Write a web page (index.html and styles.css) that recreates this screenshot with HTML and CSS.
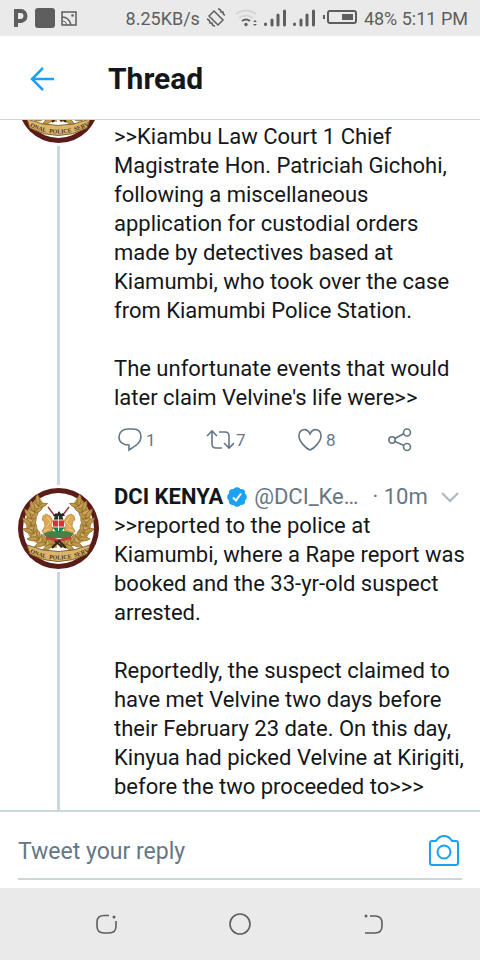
FILE: index.html
```html
<!DOCTYPE html>
<html lang="en">
<head>
<meta charset="utf-8">
<meta name="viewport" content="width=device-width, initial-scale=1">
<title>Thread</title>
<link rel="stylesheet" href="styles.css">
</head>
<body>
<svg class="defs" aria-hidden="true">
  <defs>
    <path id="ribbon-curve" d="M11 64Q40.500 79 70 64"/>
    <g id="leaf">
      <path d="M0 0Q-7-2-8-9Q0-7 0 0Q1-6 6-8Q6-1 0 0" fill="#c09a4a" stroke="#80601f" stroke-width=".6"/>
    </g>
    <g id="branch">
      <path d="M39 56Q12 55 12 35Q12 20 23 12" fill="none" stroke="#b08a3e" stroke-width="8"/>
      <path d="M39 56Q12 55 12 35Q12 20 23 12" fill="none" stroke="#d0ae66" stroke-width="7" stroke-dasharray="2 2"/>
      <use href="#leaf" transform="translate(35 57) rotate(-75)"/>
      <use href="#leaf" transform="translate(28 55) rotate(-65)"/>
      <use href="#leaf" transform="translate(21 51) rotate(-48)"/>
      <use href="#leaf" transform="translate(16 45) rotate(-28)"/>
      <use href="#leaf" transform="translate(13 38) rotate(-5)"/>
      <use href="#leaf" transform="translate(13 31) rotate(10)"/>
      <use href="#leaf" transform="translate(16 24) rotate(25)"/>
      <use href="#leaf" transform="translate(20 18) rotate(38)"/>
    </g>
    <g id="lion">
      <path d="M25 28l3-2 4 2 3 5-2 4 2 4-3 5h-6l-2-3 3-5-1-5-2-1z" fill="#dca957" stroke="#a9752e" stroke-width=".6"/>
      <path d="M29 29l4 5-5 5M26 43l5-2" fill="none" stroke="#f2d28f"/>
    </g>
    <symbol id="crest" viewBox="0 0 81 81">
      <circle cx="40.500" cy="40.500" r="40.500" fill="#5b1c19"/>
      <circle cx="40.500" cy="40.500" r="35.500" fill="#fff"/>
      <use href="#branch"/>
      <use href="#branch" transform="translate(81 0) scale(-1 1)"/>
      <path d="M30 19l19 25M51 19L32 44" stroke="#9c3439" stroke-width="1.500"/>
      <use href="#lion"/>
      <use href="#lion" transform="translate(81 0) scale(-1 1)"/>
      <path d="M35 28l3-3 1 1 2-3 2 3 2-1 2 3z" fill="#222"/>
      <path d="M40.500 26c5 2 6 7 5 12q-1 5-5 8q-4-3-5-8q-1-10 5-12z" fill="#263323"/>
      <path d="M35 32h11v7H35z" fill="#d83239"/>
      <path d="M35 39h11q-1 4-5 7q-4-2-6-7z" fill="#15864a"/>
      <path d="M35 32h11M35 39h11M40.500 28v15" stroke="#fff" stroke-width=".8"/>
      <path d="M25 46q8-5 15-2q8-3 16 2l-4 4H29z" fill="#438147"/>
      <path d="M28 48l13 3 12-3v3l-12 3-13-3z" fill="#c73e3d"/>
      <path d="M34 60l7-7 7 7M37 53l7 6" fill="none" stroke="#302414" stroke-width="2"/>
      <path d="M9 57Q40 70 72 57L69 66Q40 81 12 66z" fill="#dbb56b" stroke="#83612b"/>
      <text class="crest-text"><textPath href="#ribbon-curve" startOffset="50%" text-anchor="middle">IONAL&nbsp; POLICE&nbsp; SERV</textPath></text>
    </symbol>
  </defs>
</svg>

<div class="status">
  <svg class="status-left" width="80" height="36" viewBox="0 0 80 36" aria-hidden="true">
    <path d="M16 27V9M14 11h7a4.500 5 0 0 1 0 10h-5" fill="none" stroke="#5e5e5e" stroke-width="4"/>
    <rect x="35" y="8" width="20" height="20" rx="3" fill="#5e5e5e"/>
    <path d="M62 12h14v13H62zM62 17q7 0 9 8" fill="none" stroke="#5e5e5e" stroke-width="1.500"/>
    <path d="M63 21q3 0 4 4" fill="none" stroke="#5e5e5e"/>
    <circle cx="72.500" cy="15.500" r="1.300" fill="#5e5e5e"/>
  </svg>
  <span class="speed">8.25KB/s</span>
  <svg class="status-mid" width="154" height="36" viewBox="204 0 154 36" aria-hidden="true">
    <g fill="none" stroke="#5e5e5e" stroke-width="1.500">
      <path d="M214 11l9 9-5 5-9-9zM218 9q3 0 3 3l2 0q0 3 2 3M207 19q3 1 3 4l2 0q0 3 3 3"/>
    </g>
    <g fill="none" stroke="#d4d4d4" stroke-width="2">
      <path d="M236 14q10-7 20 0M239 18q7-5 14 0"/>
    </g>
    <path d="M242 21q4-3 8 0" fill="none" stroke="#5e5e5e" stroke-width="2"/>
    <circle cx="246" cy="24.500" r="1.700" fill="#5e5e5e"/>
    <path d="M253 22l2-2 2 2zM253 24l2 2 2-2z" fill="#5e5e5e"/>
    <g fill="none" stroke="#5e5e5e" stroke-width="3" stroke-linecap="round">
      <path d="M265.500 24v.5M272 20v5M278 15v10M284.500 11v14M294.500 24v.5M301 20v5M307 15v10M313.500 11v14"/>
    </g>
    <rect x="328" y="11" width="28" height="12" rx="2" fill="none" stroke="#5e5e5e" stroke-width="2"/>
    <path d="M342 14h11v6h-11zM323 15h2v4h-2z" fill="#5e5e5e"/>
  </svg>
  <span class="clock">48% 5:11 PM</span>
</div>

<header class="topbar">
  <button class="icon-button back" aria-label="Back">
    <svg width="24" height="24" viewBox="0 0 24 24"><path d="M24 12H2M13 1L2 12l11 11" fill="none" stroke="#1da1f2" stroke-width="2.500"/></svg>
  </button>
  <h1>Thread</h1>
</header>

<main class="feed">
  <article class="tweet tweet-first">
    <div class="rail">
      <svg class="avatar" role="img" aria-label="DCI Kenya"><use href="#crest"/></svg>
      <span class="thread-line"></span>
    </div>
    <div class="content">
      <p>&gt;&gt;Kiambu Law Court 1 Chief<br>Magistrate Hon. Patriciah Gichohi,<br>following a miscellaneous<br>application for custodial orders<br>made by detectives based at<br>Kiamumbi, who took over the case<br>from Kiamumbi Police Station.</p>
      <p>The unfortunate events that would<br>later claim Velvine's life were&gt;&gt;</p>
      <div class="actions">
        <button class="action" aria-label="Reply, 1">
          <svg width="26" height="24" viewBox="0 0 26 24"><path d="M10 1h5c5 0 8 3 8 8 0 6-6 9-12 13v-5C5 17 1 14 1 9c0-5 4-8 9-8z"/></svg><span>1</span>
        </button>
        <button class="action" aria-label="Retweet, 7">
          <svg width="28" height="24" viewBox="0 0 28 24"><path d="M1 8l5-5 5 5M6 4v12q0 4 4 4h6M13 4h6q4 0 4 4v12M18 15l5 5 5-5"/></svg><span>7</span>
        </button>
        <button class="action" aria-label="Like, 8">
          <svg width="26" height="24" viewBox="0 0 26 24"><path d="M12 22C7 20 1 13 1 8c0-7 8-9 11-2 3-7 11-5 11 2 0 5-6 12-11 14z"/></svg><span>8</span>
        </button>
        <button class="action" aria-label="Share">
          <svg width="24" height="24" viewBox="0 0 24 24"><path d="M7 10.500l9-5M7 13.500l9 4"/><circle cx="4" cy="12" r="3.200"/><circle cx="19" cy="4.500" r="3.500"/><circle cx="19" cy="19" r="3.500"/></svg>
        </button>
      </div>
    </div>
  </article>

  <article class="tweet">
    <div class="rail">
      <span class="thread-line thread-top"></span>
      <svg class="avatar" role="img" aria-label="DCI Kenya"><use href="#crest"/></svg>
      <span class="thread-line"></span>
    </div>
    <div class="content">
      <div class="byline">
        <strong>DCI KENYA</strong>
        <svg class="badge" width="20" height="20" viewBox="0 0 20 20" role="img" aria-label="Verified">
          <g fill="#1da1f2"><circle cx="10" cy="10" r="8"/><circle cx="10" cy="4" r="3.800"/><circle cx="14.300" cy="5.700" r="3.800"/><circle cx="16" cy="10" r="3.800"/><circle cx="14.300" cy="14.300" r="3.800"/><circle cx="10" cy="16" r="3.800"/><circle cx="5.700" cy="14.300" r="3.800"/><circle cx="4" cy="10" r="3.800"/><circle cx="5.700" cy="5.700" r="3.800"/></g>
          <path d="M6 10.500l3 3 5-7" fill="none" stroke="#fff" stroke-width="2"/>
        </svg>
        <span class="handle">@DCI_Ke…</span>
        <span class="time">· 10m</span>
        <button class="icon-button more" aria-label="More">
          <svg width="18" height="12" viewBox="0 0 18 12"><path d="M1 2l8 8 8-8" fill="none" stroke="#aab8c2" stroke-width="2"/></svg>
        </button>
      </div>
      <p>&gt;&gt;reported to the police at<br>Kiamumbi, where a Rape report was<br>booked and the 33-yr-old suspect<br>arrested.</p>
      <p>Reportedly, the suspect claimed to<br>have met Velvine two days before<br>their February 23 date. On this day,<br>Kinyua had picked Velvine at Kirigiti,<br>before the two proceeded to&gt;&gt;&gt;</p>
    </div>
  </article>
</main>

<form class="composer">
  <div class="field">
    <input type="text" aria-label="Tweet your reply" placeholder="Tweet your reply">
    <button type="button" class="icon-button" aria-label="Add photo">
      <svg width="32" height="32" viewBox="0 0 32 32" fill="none" stroke="#1da1f2" stroke-width="2"><path d="M4 6h4q3-5 8-5t8 5h4q2 0 2 2v20q0 2-2 2H4q-2 0-2-2V8q0-2 2-2z"/><circle cx="16" cy="17" r="6.500"/></svg>
    </button>
  </div>
</form>

<nav class="system-nav" aria-label="System">
  <button class="icon-button" aria-label="Recent apps"><svg width="24" height="24" viewBox="0 0 24 24"><path d="M14 3.500H9Q2 3.500 2 10v4q0 7 7 7h5q7 0 7-7V9"/><circle class="dot" cx="19" cy="5" r="1.500"/></svg></button>
  <button class="icon-button" aria-label="Home"><svg width="24" height="24" viewBox="0 0 24 24"><circle cx="12" cy="12" r="10"/></svg></button>
  <button class="icon-button" aria-label="System back"><svg width="24" height="24" viewBox="0 0 24 24"><path d="M9 4h5q7 0 7 7v3q0 7-7 7H4"/><circle class="dot" cx="5" cy="4" r="1.500"/></svg></button>
</nav>
</body>
</html>
```
FILE: styles.css
```css
* {
  box-sizing: border-box;
}

body {
  margin: 0;
  height: 100vh;
  display: flex;
  flex-direction: column;
  background: #fff;
  color: #14171a;
  font-family: Roboto, "Liberation Sans", sans-serif;
  font-size: 22px;
  line-height: 29px;
}

svg {
  display: block;
  flex: none;
}

.defs {
  position: absolute;
  width: 0;
  height: 0;
}

button {
  padding: 0;
  border: 0;
  background: none;
  color: inherit;
  font: inherit;
}

.icon-button {
  display: flex;
  align-items: center;
  justify-content: center;
}

.status {
  flex: none;
  display: flex;
  align-items: center;
  height: 36px;
  padding-right: 12px;
  background: #eaeaea;
  color: #5e5e5e;
  font-size: 18px;
}

.speed {
  margin-left: auto;
  margin-right: 4px;
}

.clock {
  margin-left: 6px;
}

.topbar {
  flex: none;
  display: flex;
  align-items: center;
  gap: 54px;
  height: 84px;
  padding: 2px 30px 0;
  border-bottom: 1px solid #ccd6dd;
}

h1 {
  margin: 0;
  font-size: 30px;
  font-weight: 700;
  line-height: 36px;
}

.feed {
  flex: 1;
  min-height: 0;
  display: flex;
  flex-direction: column;
  justify-content: flex-end;
  overflow: hidden;
}

.tweet {
  flex: none;
  display: flex;
  gap: 15px;
  padding: 0 16px 0 18px;
}

.rail {
  flex: none;
  width: 81px;
  display: flex;
  flex-direction: column;
  align-items: center;
  gap: 3px;
}

.tweet-first .rail {
  margin-top: -60px;
}

.avatar {
  width: 81px;
  height: 81px;
}

.thread-line {
  flex: 1;
  width: 3px;
  background: #ccd6dd;
}

.thread-top {
  flex: none;
  height: 3px;
}

.content {
  flex: 1;
  min-width: 0;
  padding-bottom: 9px;
}

.tweet-first .content {
  padding-bottom: 0;
}

p {
  margin: 0;
  white-space: nowrap;
}

p + p {
  margin-top: 29px;
}

.actions {
  display: grid;
  grid-template-columns: 88px 92px 90px 28px;
  align-items: center;
  height: 70px;
  padding: 0 4px 14px;
}

.action {
  display: flex;
  align-items: center;
  gap: 2px;
  color: #657786;
  font-size: 17px;
}

.action svg {
  fill: none;
  stroke: #657786;
  stroke-width: 1.6;
}

.byline {
  display: flex;
  align-items: center;
  white-space: nowrap;
  color: #657786;
}

.byline strong {
  color: #14171a;
}

.badge {
  margin: 0 7px 0 4px;
}

.time {
  margin-left: 14px;
}

.more {
  margin-left: auto;
  margin-right: 5px;
}

.composer {
  flex: none;
  padding: 0 18px 8px;
  border-top: 2px solid #ccd6dd;
}

.field {
  display: flex;
  align-items: center;
  height: 68px;
  padding: 12px 2px 0 0;
  border-bottom: 2px solid #ccd6dd;
}

input {
  flex: 1;
  min-width: 0;
  padding: 0;
  border: 0;
  outline: 0;
  color: #14171a;
  font: inherit;
  font-size: 23px;
}

input::placeholder {
  color: #657786;
  opacity: 1;
}

.system-nav {
  flex: none;
  display: flex;
  justify-content: space-between;
  height: 72px;
  padding: 0 95px;
  background: #eaeaea;
}

.system-nav svg {
  fill: none;
  stroke: #5e5e5e;
  stroke-width: 1.6;
}

.system-nav .dot {
  fill: #5e5e5e;
  stroke: none;
}

.crest-text {
  fill: #493714;
  font: bold 6px "Liberation Serif", serif;
}
```
